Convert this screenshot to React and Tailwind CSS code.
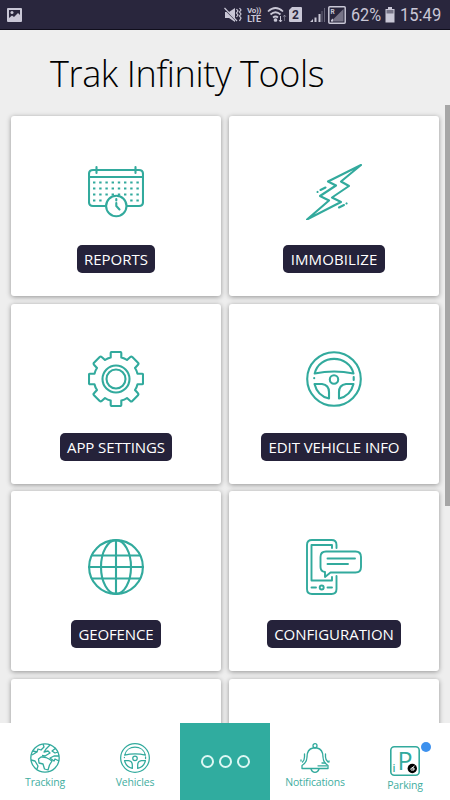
import React from "react";

// Line icons of the tools grid, all on a 56x56 canvas
function Icon({ children, className = "w-14 h-14", strokeWidth = 2.1 }) {
  return (
    <svg
      viewBox="0 0 56 56"
      className={className}
      fill="none"
      stroke="#32aa9d"
      strokeWidth={strokeWidth}
      strokeLinecap="round"
      strokeLinejoin="round"
    >
      {children}
    </svg>
  );
}

function CalendarIcon() {
  return (
    <Icon>
      <path d="M17 42H5Q1 42 1 38V10Q1 6 5 6H51Q55 6 55 10V38Q55 42 51 42H39M1 13H55" />
      <path d="M8.500 3V9M47.500 3V9" />
      <g strokeWidth="1.900" strokeLinecap="butt" strokeDasharray="2.4 3.800">
        <path d="M5 18.500H51.500M5 24.500H51.500M5 30.500H51.500" />
        <path d="M5 36.500H17M42.200 36.500H51.500" />
      </g>
      <circle cx="28.300" cy="42" r="10.200" fill="white" />
      <path d="M28.300 35V36.500M28.300 39V42L31.500 45.500" />
    </Icon>
  );
}

function BoltIcon() {
  return (
    <Icon>
      <path d="M55 1L22 17.500L30 21.500L14 32L23 36.500L1 55.500L35 38L26 33.500L43 22L35 17.500Z" />
      <path d="M14.500 26L19.500 23.500M11.500 28L11.600 27.900M33 43.500L38 41M40.500 39.500L40.600 39.400" />
    </Icon>
  );
}

function GearIcon() {
  return (
    <Icon>
      <path d="M22.700 6.500V2Q22.700 1 23.700 1H32.300Q33.300 1 33.300 2V6.500Q36.500 7.200 39 9L42.300 6Q43.300 5.200 44.300 6L50 11.700Q51 12.700 50 13.700L47 17Q48.800 19.500 49.500 22.700H54Q55 22.700 55 23.700V32.300Q55 33.300 54 33.300H49.500Q48.800 36.500 47 39L50 42.300Q50.800 43.300 50 44.300L44.300 50Q43.300 51 42.300 50L39 47Q36.500 48.800 33.300 49.500V54Q33.300 55 32.300 55H23.700Q22.700 55 22.700 54V49.500Q19.500 48.800 17 47L13.700 50Q12.700 50.800 11.700 50L6 44.300Q5 43.300 6 42.300L9 39Q7.200 36.500 6.500 33.300H2Q1 33.300 1 32.300V23.700Q1 22.700 2 22.700H6.500Q7.200 19.500 9 17L6 13.700Q5.200 12.700 6 11.700L11.700 6Q12.700 5 13.700 6L17 9Q19.500 7.200 22.700 6.500Z" />
      <circle cx="28" cy="28" r="13.500" />
      <circle cx="28" cy="28" r="9.500" />
    </Icon>
  );
}

function WheelIcon({ className, strokeWidth }) {
  return (
    <Icon className={className} strokeWidth={strokeWidth}>
      <circle cx="28" cy="28" r="26.800" />
      <path d="M8.700 22.500C13 3 43 3 47.500 22.500Q28 18.500 8.700 22.500Z" />
      <circle cx="28" cy="28.500" r="4.200" />
      <path d="M8.500 33H16Q23 34 23 41V47.500Q11.500 45 8.500 33Z" />
      <path d="M47.500 33H40Q33 34 33 41V47.500Q44.500 45 47.500 33Z" />
      <path d="M8.200 27V27.200M47.700 26V29" />
    </Icon>
  );
}

function GlobeIcon() {
  return (
    <Icon>
      <circle cx="28" cy="28" r="26.900" />
      <ellipse cx="28" cy="28" rx="15" ry="26.900" />
      <path d="M28 1V55M1 28H55M4 16.500H52M4 39.500H52" />
    </Icon>
  );
}

function PhoneIcon() {
  return (
    <Icon strokeWidth={1.9}>
      <path d="M30.500 9V6Q30.500 1 25.500 1H6Q1 1 1 6V50Q1 55 6 55H25.500Q30.500 55 30.500 50V37" />
      <path d="M26 9V6H5.500V41.500H26V38" />
      <path d="M20 12.500H49.500Q55 12.500 55 18V28Q55 33.500 49.500 33.500H24.500L19 38V33Q14.500 32.500 14.500 28V18Q14.500 12.500 20 12.500Z" />
      <path d="M21.500 19.500H49M21.500 25H42M5.500 48.500H10M21.500 48.500H26" />
      <circle cx="15.700" cy="48.500" r="2" />
    </Icon>
  );
}

const tools = [
  { label: "REPORTS", icon: <CalendarIcon />, width: "w-[78px]", spacing: "tracking-normal" },
  { label: "IMMOBILIZE", icon: <BoltIcon />, width: "w-[102px]", spacing: "tracking-[0.1px]" },
  { label: "APP SETTINGS", icon: <GearIcon />, width: "w-[112px]", spacing: "tracking-[-0.1px]" },
  { label: "EDIT VEHICLE INFO", icon: <WheelIcon />, width: "w-[146px]", spacing: "tracking-[-0.1px]" },
  { label: "GEOFENCE", icon: <GlobeIcon />, width: "w-[90px]", spacing: "tracking-[-0.15px]" },
  { label: "CONFIGURATION", icon: <PhoneIcon />, width: "w-[134px]", spacing: "tracking-[-0.05px]" },
  { label: "", icon: null },
  { label: "", icon: null },
];

function ToolCard({ tool }) {
  return (
    <div className="h-[180px] bg-white rounded-[3px] shadow-[0_1px_5px_rgba(0,0,0,0.38)] flex flex-col items-center pt-[47.5px]">
      {tool.icon}
      {tool.label && (
        <span
          className={`mt-[25.5px] h-7 shrink-0 rounded-[5px] bg-[#25223a] text-white text-[15px] leading-7 flex justify-center whitespace-nowrap ${tool.width} ${tool.spacing}`}
        >
          {tool.label}
        </span>
      )}
    </div>
  );
}

function StatusBar() {
  return (
    <div className="h-[30px] shrink-0 bg-[#29263d] border-b border-[#100e1c] flex items-center justify-between pl-[7px] pr-[9px] text-[#c9c7d6]">
      <svg viewBox="0 0 16 16" className="w-4 h-4">
        <rect x="0" y="1" width="15" height="14" rx="1" fill="#c9c7d6" />
        <path d="M2 3H13V8L11 6L7 10L5 8.500L2 11Z" fill="#29263d" />
        <circle cx="5" cy="5.500" r="1.500" fill="#c9c7d6" />
      </svg>
      <div className="flex items-center font-['Roboto',sans-serif]">
        <svg viewBox="0 0 18 16" className="w-[18px] h-4" fill="none" stroke="currentColor">
          <path d="M1 5H5L11 1V15L5 11H1Z" fill="currentColor" stroke="none" />
          <path d="M1 2.500L12 13.500" stroke="#29263d" strokeWidth="1.200" />
          <path d="M0.500 1L13 14" strokeWidth="1.200" />
          <path d="M12.500 2L14 4L12.500 6L14 8L12.500 10M15.500 1L17 3L15.500 5L17 7L15.500 9L17 11L15.500 14" strokeWidth="1.200" />
        </svg>
        <div className="ml-[4px] w-4 text-[8px] leading-[8px] font-bold text-center tracking-[-0.3px]">
          <div>Vo))</div>
          <div className="text-[9px]">LTE</div>
        </div>
        <svg viewBox="0 0 20 17" className="ml-[5px] w-5 h-[17px]" fill="none" stroke="currentColor" strokeWidth="1.700">
          <path d="M1 5.500Q8.500-1.500 16 5.500M3.500 8.500Q8.500 4 13.500 8.500M6 11.500Q8.500 9.500 11 11.500" />
          <circle cx="8.500" cy="14" r="1" fill="currentColor" />
          <path d="M13.500 10V16M12 14L13.500 16L15 14" strokeWidth="1" />
          <path d="M17.500 15V9M16 11L17.500 9L19 11" strokeWidth="1" opacity="0.4" />
        </svg>
        <svg viewBox="0 0 13 15" className="ml-0.5 w-[13px] h-[15px]">
          <path d="M3 0H12Q13 0 13 1V14Q13 15 12 15H1Q0 15 0 14V3Z" fill="currentColor" />
          <text x="6.500" y="12" textAnchor="middle" fontSize="12" fontWeight="700" fill="#29263d">2</text>
        </svg>
        <svg viewBox="0 0 17 15" className="ml-2 w-[17px] h-[15px]" fill="currentColor">
          <path d="M0 15L3 12V15ZM4.500 10.500H6.500V15H4.500ZM8.500 7H10.500V15H8.500Z" />
          <path d="M11.500 4H12.500V15H11.500ZM14 1H15V15H14Z" opacity="0.4" />
        </svg>
        <svg viewBox="0 0 18 18" className="ml-px w-[18px] h-[18px]">
          <rect x="0.800" y="0.800" width="16.400" height="16.400" rx="1" fill="none" stroke="currentColor" strokeWidth="1.500" />
          <path d="M15.500 3V15.500H3Z" fill="#777487" />
          <path d="M3 15.500V14L5 12.500V15.500Z" fill="currentColor" />
          <text x="2.500" y="8" fontSize="6.500" fontWeight="700" fill="currentColor">R</text>
        </svg>
        <div className="ml-[5px] w-[30px] text-lg leading-[30px]">
          <span className="inline-block origin-left scale-x-[0.9]">62%</span>
        </div>
        <svg viewBox="0 0 10 16" className="ml-1 w-2.5 h-4">
          <path d="M3 0H7V2H9.500V15.500H0.500V2H3Z" fill="currentColor" />
          <path d="M1.500 3H8.500V6.500H1.500Z" fill="#777487" />
        </svg>
        <div className="ml-[5px] w-[41px] text-lg leading-[30px]">
          <span className="inline-block origin-left scale-x-[0.92]">15:49</span>
        </div>
      </div>
    </div>
  );
}

function EarthIcon() {
  return (
    <svg viewBox="0 0 30 30" className="w-[30px] h-[30px]" fill="none" stroke="#32aa9d" strokeWidth="1.300" strokeLinejoin="round">
      <circle cx="15" cy="15" r="14.200" />
      <path d="M3 8L7 9L8 6L11 7L14 4L13 1M7 9L2 12M1 17L5 18L8 23L7 26" />
      <path d="M20 2L16 6L14 9L18 8L20 10L15 13L12 12.500" />
      <path d="M11 14L8.500 16L9 20L13 21L14.500 26L18 27L19.500 22L22 18L19 16L16 14.500L13 14Z" />
      <path d="M29 13L24 13L20 15L24 18L25 16L29 18M26 5L22 8L25 10L28 9" />
    </svg>
  );
}

function BellIcon() {
  return (
    <svg viewBox="0 0 30 30" className="w-[30px] h-[30px]" fill="none" stroke="#32aa9d" strokeWidth="1.300" strokeLinecap="round" strokeLinejoin="round">
      <circle cx="15" cy="2.700" r="2" />
      <path d="M13 5C8 6 7 10 7 14C7 18 6 20 2 22.500V25.500H28V22.500C24 20 23 18 23 14C23 10 22 6 17 5Z" />
      <path d="M11 26Q12 29.300 15 29.300Q18 29.300 19 26M18 22.800H27M22 20H25" />
      <path d="M4.500 11V14Q4.500 17 2.500 19M1 17V18M25.500 11V14Q25.500 17 28 19M29 18V19" />
    </svg>
  );
}

function ParkingIcon() {
  return (
    <svg viewBox="0 0 30 30" className="w-[30px] h-[30px] overflow-visible font-['Open_Sans',sans-serif]">
      <rect x="0.800" y="0.800" width="28.400" height="28.400" rx="3.500" fill="none" stroke="#32aa9d" strokeWidth="1.600" />
      <text x="7.500" y="24" fontSize="25" fill="#32aa9d">P</text>
      <text x="2.500" y="26" fontSize="10.500" fontWeight="600" fill="#32aa9d">i</text>
      <circle cx="22.300" cy="22.500" r="4.700" fill="black" />
      <path d="M20.500 23.500L21.500 22H24V24H21M22 22L24.500 20" fill="none" stroke="white" strokeWidth="1" />
    </svg>
  );
}

function NavItem({ icon, label, offset = "pt-5" }) {
  return (
    <div className={`w-[90px] flex flex-col items-center ${offset}`}>
      {icon}
      <span className="mt-0.5 text-[10.5px] leading-[15px] tracking-[-0.17px] text-[#3fae9f]">{label}</span>
    </div>
  );
}

function BottomNav() {
  return (
    <nav className="h-[77px] shrink-0 bg-white flex">
      <NavItem icon={<EarthIcon />} label="Tracking" />
      <NavItem icon={<WheelIcon className="w-[30px] h-[30px]" strokeWidth={2.3} />} label="Vehicles" />
      <div className="w-[90px] bg-[#30ac9f] flex justify-center items-center gap-[5px]">
        <span className="w-[13px] h-[13px] rounded-full border-2 border-[#dcf7f3]" />
        <span className="w-[13px] h-[13px] rounded-full border-2 border-[#dcf7f3]" />
        <span className="w-[13px] h-[13px] rounded-full border-2 border-[#dcf7f3]" />
      </div>
      <NavItem icon={<BellIcon />} label="Notifications" />
      <div className="relative">
        <NavItem icon={<ParkingIcon />} label="Parking" offset="pt-[23px]" />
        {/* Unread badge */}
        <span className="absolute left-[61px] top-[19px] w-2.5 h-2.5 rounded-full bg-[#3d91ee]" />
      </div>
    </nav>
  );
}

export default function App() {
  return (
    <div className="w-[450px] h-[800px] bg-[#eeeeee] flex flex-col overflow-hidden font-['Open_Sans',sans-serif]">
      <StatusBar />
      <h1 className="h-[75px] shrink-0 pl-[50px] pt-[19px] text-[36px] leading-[50px] tracking-[-0.38px] font-light text-black whitespace-nowrap">
        Trak Infinity Tools
      </h1>
      <div className="flex-1 min-h-0 flex overflow-hidden">
        <div className="grid grid-cols-[210px_210px] auto-rows-[180px] gap-x-2 gap-y-[7.6px] pl-[11px] pt-[11px] w-[445px] shrink-0">
          {tools.map((tool, idx) => (
            <ToolCard key={idx} tool={tool} />
          ))}
        </div>
        {/* Scrollbar thumb */}
        <div className="w-[5px] h-[401px] bg-[#a6a6a6]" />
      </div>
      <BottomNav />
    </div>
  );
}
